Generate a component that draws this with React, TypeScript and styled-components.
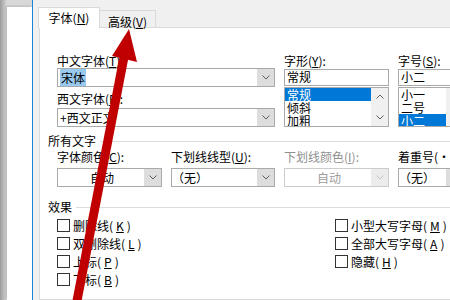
import React from "react";
import styled, { createGlobalStyle, css } from "styled-components";

const GlobalStyle = createGlobalStyle`
  html, body {
    margin: 0;
    padding: 0;
    background: #fff;
  }
  body {
    font-family: "Noto Sans CJK SC", "Noto Sans", sans-serif;
    font-size: 12px;
    color: #000;
  }
  * { box-sizing: border-box; }
`;

const Screen = styled.div`
  position: relative;
  width: 450px;
  height: 300px;
  overflow: hidden;
  display: flex;
`;

/* word document behind the dialog */
const DocGutter = styled.div`
  width: 32px;
  flex: none;
  display: flex;
  background: linear-gradient(to right, #9c9c9c 0px, #d8d8d8 7px);
`;

const DocPage = styled.div`
  flex: 1;
  margin: 7px 0 0 7px;
  background: #fff;
  box-shadow: -1px -1px 2px rgba(0, 0, 0, 0.15);
`;

const Dialog = styled.div`
  flex: none;
  width: 450px;
  border-left: 1px solid #1883d7;
  background: #f0f0f0;
  padding: 7px 0 0 5px;
  display: flex;
  flex-direction: column;
`;

const TabStrip = styled.div`
  position: relative;
  z-index: 1;
  display: flex;
  align-items: flex-end;
  height: 21px;
`;

const Tab = styled.div<{ $active?: boolean }>`
  line-height: 14px;
  text-align: center;
  white-space: nowrap;
  border: 1px solid #d9d9d9;
  border-bottom: none;
  ${(p) =>
    p.$active
      ? css`
          width: 62px;
          height: 21px;
          padding-top: 3px;
          background: #fff;
        `
      : css`
          width: 56px;
          height: 17px;
          margin-bottom: 1px;
          padding-top: 4px;
          border-left: none;
          background: #f0f0f0;
        `}
`;

const Panel = styled.div`
  flex: 1;
  margin: -1px 0 0 1px;
  border: 1px solid #d9d9d9;
  background: #fff;
  padding: 26px 0 0 8px;
`;

const FieldRow = styled.div`
  display: flex;
  gap: 9px;
  margin-left: 9px;
`;

const Field = styled.div<{ $w: number }>`
  width: ${(p) => p.$w}px;
  flex: none;
  display: flex;
  flex-direction: column;
`;

const Label = styled.div<{ $disabled?: boolean; $gap?: number }>`
  line-height: 14px;
  height: 14px;
  white-space: nowrap;
  margin-top: ${(p) => p.$gap ?? 0}px;
  color: ${(p) => (p.$disabled ? "#8f8f8f" : "#000")};
`;

const Combo = styled.div<{ $disabled?: boolean; $gap?: number }>`
  height: 19px;
  margin-top: ${(p) => p.$gap ?? 0}px;
  display: flex;
  align-items: center;
  border: 1px solid ${(p) => (p.$disabled ? "#cccccc" : "#a9a9a9")};
  background: #fff;
  color: ${(p) => (p.$disabled ? "#9c9c9c" : "#000")};
  white-space: nowrap;
  overflow: hidden;
`;

const ComboText = styled.div<{ $center?: boolean; $pad?: number }>`
  flex: 1;
  line-height: 14px;
  padding-left: ${(p) => p.$pad ?? 2}px;
  text-align: ${(p) => (p.$center ? "center" : "left")};
`;

const Highlight = styled.span`
  background: #99c9ef;
  padding: 0 1px;
`;

const DropButton = styled.div<{ $disabled?: boolean }>`
  width: 17px;
  height: 17px;
  flex: none;
  display: flex;
  align-items: center;
  justify-content: center;
  background: ${(p) => (p.$disabled ? "#ececec" : "#dddddd")};
`;

const TextBox = styled.div`
  height: 17px;
  margin-top: 1px;
  border: 1px solid #a9a9a9;
  line-height: 14px;
  padding-left: 2px;
  white-space: nowrap;
  overflow: hidden;
`;

const ListBox = styled.div`
  height: 40px;
  margin-top: 1px;
  border: 1px solid #a9a9a9;
  display: flex;
  overflow: hidden;
`;

const ListItems = styled.div`
  flex: 1;
  display: flex;
  flex-direction: column;
`;

const ListItem = styled.div<{ $selected?: boolean }>`
  height: 13px;
  flex: none;
  line-height: 13px;
  padding-left: 2px;
  white-space: nowrap;
  background: ${(p) => (p.$selected ? "#0078d7" : "transparent")};
  color: ${(p) => (p.$selected ? "#fff" : "#000")};
`;

const ScrollBar = styled.div`
  width: 17px;
  flex: none;
  background: #f0f0f0;
  display: flex;
  flex-direction: column;
  justify-content: space-between;
`;

const ScrollArrow = styled.div`
  height: 17px;
  display: flex;
  align-items: center;
  justify-content: center;
`;

const SectionHeader = styled.div<{ $gap: number }>`
  display: flex;
  align-items: center;
  gap: 4px;
  line-height: 14px;
  margin-top: ${(p) => p.$gap}px;
  white-space: nowrap;
  &::after {
    content: "";
    flex: 1;
    height: 1px;
    background: #dcdcdc;
  }
`;

const CheckColumns = styled.div`
  display: flex;
  margin: 5px 0 0 9px;
`;

const CheckColumn = styled.div<{ $w?: number }>`
  width: ${(p) => (p.$w ? `${p.$w}px` : "auto")};
  display: flex;
  flex-direction: column;
  gap: 5px;
`;

const CheckRow = styled.label`
  display: flex;
  align-items: center;
  gap: 3px;
  height: 13px;
  line-height: 13px;
  white-space: nowrap;
`;

const CheckBox = styled.span`
  width: 13px;
  height: 13px;
  flex: none;
  border: 1px solid #333;
  background: #fff;
`;

const ArrowOverlay = styled.svg`
  position: absolute;
  left: 0;
  top: 0;
  z-index: 5;
  pointer-events: none;
`;

const Chevron = ({ up, color = "#606060" }: { up?: boolean; color?: string }) => (
  <svg width="8" height="5" viewBox="0 0 8 5">
    <polyline
      points={up ? "0.5,4.5 4,1 7.5,4.5" : "0.5,0.5 4,4 7.5,0.5"}
      fill="none"
      stroke={color}
      strokeWidth="1"
    />
  </svg>
);

const Key = ({ k }: { k: string }) => (
  <>
    (<u>{k}</u>)
  </>
);

const List = ({ items, selected }: { items: string[]; selected: number }) => (
  <ListBox>
    <ListItems>
      {items.map((t, i) => (
        <ListItem key={t} $selected={i === selected}>
          {t}
        </ListItem>
      ))}
    </ListItems>
    <ScrollBar>
      <ScrollArrow>
        <Chevron up />
      </ScrollArrow>
      <ScrollArrow>
        <Chevron />
      </ScrollArrow>
    </ScrollBar>
  </ListBox>
);

const Select = ({
  text,
  center,
  disabled,
  pad,
}: {
  text: string;
  center?: boolean;
  disabled?: boolean;
  pad?: number;
}) => (
  <Combo $gap={4} $disabled={disabled}>
    <ComboText $center={center} $pad={pad}>
      {text}
    </ComboText>
    <DropButton $disabled={disabled}>
      <Chevron color={disabled ? "#c4c4c4" : "#606060"} />
    </DropButton>
  </Combo>
);

export default function App() {
  return (
    <Screen>
      <GlobalStyle />
      <DocGutter>
        <DocPage />
      </DocGutter>
      <Dialog>
        <TabStrip>
          <Tab $active>
            字体<Key k="N" />
          </Tab>
          <Tab>
            高级<Key k="V" />
          </Tab>
        </TabStrip>
        <Panel>
          <FieldRow>
            <Field $w={218}>
              <Label>
                中文字体<Key k="T" />:
              </Label>
              <Combo>
                <ComboText>
                  <Highlight>宋体</Highlight>
                </ComboText>
                <DropButton>
                  <Chevron />
                </DropButton>
              </Combo>
              <Label $gap={5}>
                西文字体<Key k="F" />:
              </Label>
              <Combo $gap={2}>
                <ComboText>+西文正文</ComboText>
                <DropButton>
                  <Chevron />
                </DropButton>
              </Combo>
            </Field>
            <Field $w={105}>
              <Label>
                字形<Key k="Y" />:
              </Label>
              <TextBox>常规</TextBox>
              <List items={["常规", "倾斜", "加粗"]} selected={0} />
            </Field>
            <Field $w={66}>
              <Label>
                字号<Key k="S" />:
              </Label>
              <TextBox>小二</TextBox>
              <List items={["小一", "二号", "小二"]} selected={2} />
            </Field>
          </FieldRow>

          <SectionHeader $gap={7}>所有文字</SectionHeader>
          <FieldRow>
            <Field $w={105}>
              <Label $gap={2}>
                字体颜色<Key k="C" />:
              </Label>
              <Select text="自动" center />
            </Field>
            <Field $w={104}>
              <Label $gap={2}>
                下划线线型<Key k="U" />:
              </Label>
              <Select text="（无）" pad={0} />
            </Field>
            <Field $w={105}>
              <Label $gap={2} $disabled>
                下划线颜色<Key k="I" />:
              </Label>
              <Select text="自动" center disabled />
            </Field>
            <Field $w={66}>
              <Label $gap={2}>着重号(·):</Label>
              <Select text="（无）" pad={0} />
            </Field>
          </FieldRow>

          <SectionHeader $gap={13}>效果</SectionHeader>
          <CheckColumns>
            <CheckColumn $w={278}>
              <CheckRow>
                <CheckBox />
                删除线<Key k="K" />
              </CheckRow>
              <CheckRow>
                <CheckBox />
                双删除线<Key k="L" />
              </CheckRow>
              <CheckRow>
                <CheckBox />
                上标<Key k="P" />
              </CheckRow>
              <CheckRow>
                <CheckBox />
                下标<Key k="B" />
              </CheckRow>
            </CheckColumn>
            <CheckColumn>
              <CheckRow>
                <CheckBox />
                小型大写字母<Key k="M" />
              </CheckRow>
              <CheckRow>
                <CheckBox />
                全部大写字母<Key k="A" />
              </CheckRow>
              <CheckRow>
                <CheckBox />
                隐藏<Key k="H" />
              </CheckRow>
            </CheckColumn>
          </CheckColumns>
        </Panel>
      </Dialog>

      <ArrowOverlay width="450" height="300" viewBox="0 0 450 300">
        <line x1="76" y1="306" x2="124" y2="57" stroke="#c00000" strokeWidth="9" />
        <polygon points="129,29 112,56 137,62" fill="#c00000" />
      </ArrowOverlay>
    </Screen>
  );
}
